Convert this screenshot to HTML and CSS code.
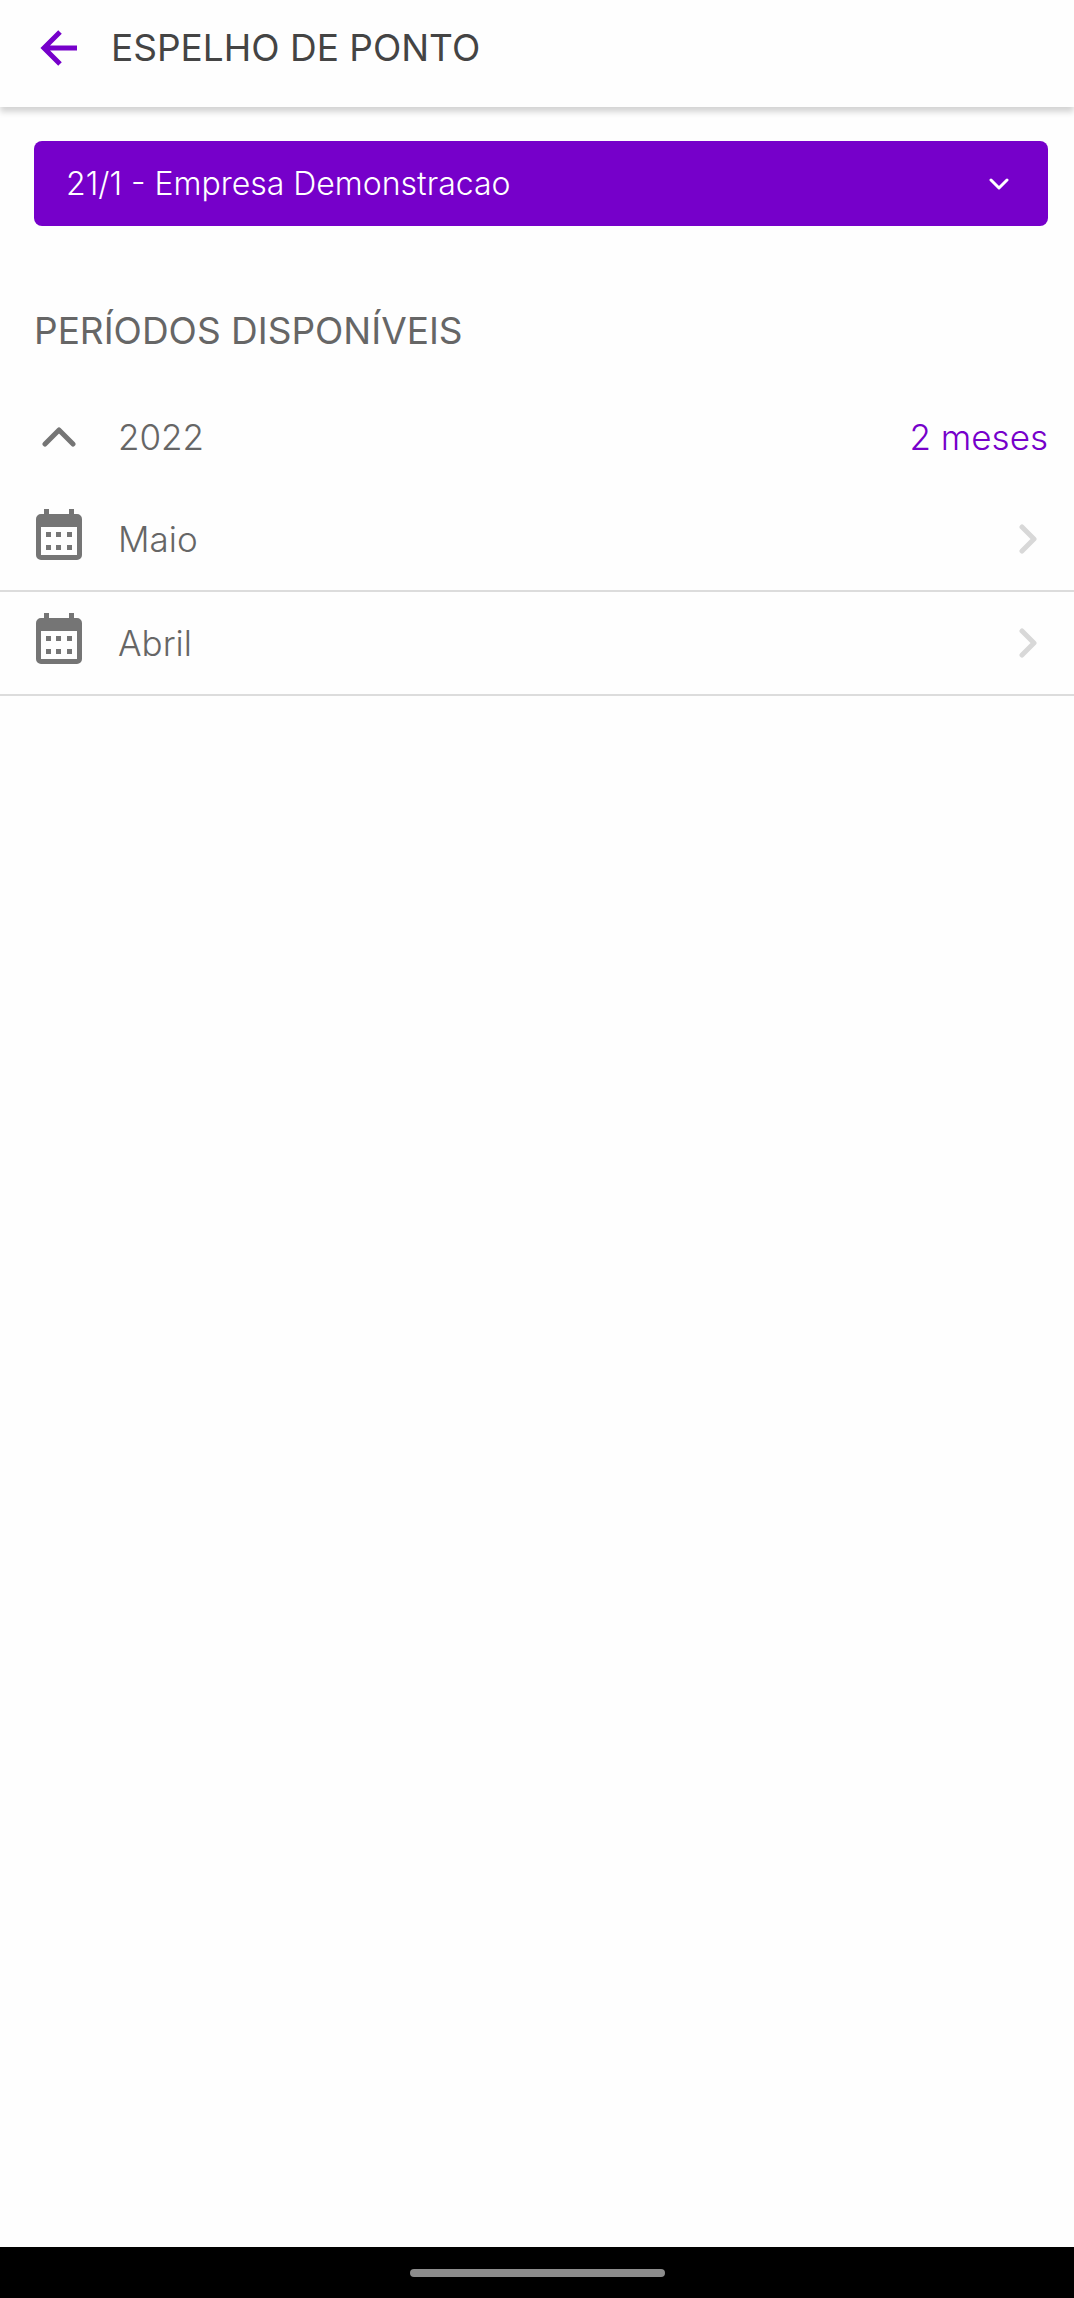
FILE: index.html
```html
<!DOCTYPE html>
<html lang="pt-BR">
<head>
<meta charset="utf-8">
<meta name="viewport" content="width=device-width, initial-scale=1">
<title>Espelho de ponto</title>
<link rel="stylesheet" href="styles.css">
</head>
<body>
<header class="topbar">
  <button class="back" type="button" aria-label="Voltar">
    <svg width="40" height="40" viewBox="0 0 40 40" fill="none" stroke="currentColor" stroke-width="5"><path d="M38 20H6M21 4 5 20l16 16"/></svg>
  </button>
  <h1 class="title">ESPELHO DE PONTO</h1>
</header>
<main class="content">
  <div class="company">
    <select class="company-select" aria-label="Empresa">
      <option>21/1 - Empresa Demonstracao</option>
    </select>
    <svg class="company-arrow" width="20" height="14" viewBox="0 0 20 14" fill="none" stroke="currentColor" stroke-width="3" stroke-linecap="round" stroke-linejoin="round"><path d="m2 3 8 8 8-8"/></svg>
  </div>
  <h2 class="section-title">PERÍODOS DISPONÍVEIS</h2>
  <button class="year" type="button" aria-expanded="true">
    <span class="lead"><svg width="34" height="20" viewBox="0 0 34 20" fill="none" stroke="currentColor" stroke-width="5" stroke-linecap="round" stroke-linejoin="round"><path d="M3 17 17 3l14 14"/></svg></span>
    <span class="label">2022</span>
    <span class="count">2 meses</span>
  </button>
  <ul class="months">
    <li>
      <a class="month" href="#maio">
        <span class="lead"><svg width="46" height="51" viewBox="0 0 46 51" fill="currentColor"><path fill-rule="evenodd" d="M8 0h5v5h20V0h5v5h3a5 5 0 0 1 5 5v36a5 5 0 0 1-5 5H5a5 5 0 0 1-5-5V10a5 5 0 0 1 5-5h3zM5 18v28h36V18z"/><path d="M10 23h5v5h-5zM20 23h5v5h-5zM31 23h5v5h-5zM10 36h5v5h-5zM20 36h5v5h-5zM31 36h5v5h-5z"/></svg></span>
        <span class="label">Maio</span>
        <svg class="go" width="18" height="30" viewBox="0 0 18 30" fill="none" stroke="currentColor" stroke-width="5" stroke-linecap="round" stroke-linejoin="round"><path d="m3 3 12 12L3 27"/></svg>
      </a>
    </li>
    <li>
      <a class="month" href="#abril">
        <span class="lead"><svg width="46" height="51" viewBox="0 0 46 51" fill="currentColor"><path fill-rule="evenodd" d="M8 0h5v5h20V0h5v5h3a5 5 0 0 1 5 5v36a5 5 0 0 1-5 5H5a5 5 0 0 1-5-5V10a5 5 0 0 1 5-5h3zM5 18v28h36V18z"/><path d="M10 23h5v5h-5zM20 23h5v5h-5zM31 23h5v5h-5zM10 36h5v5h-5zM20 36h5v5h-5zM31 36h5v5h-5z"/></svg></span>
        <span class="label">Abril</span>
        <svg class="go" width="18" height="30" viewBox="0 0 18 30" fill="none" stroke="currentColor" stroke-width="5" stroke-linecap="round" stroke-linejoin="round"><path d="m3 3 12 12L3 27"/></svg>
      </a>
    </li>
  </ul>
</main>
<footer class="navbar"><div class="handle"></div></footer>
</body>
</html>
```
FILE: styles.css
```css
* { box-sizing: border-box; }
body {
  margin: 0;
  min-height: 100vh;
  display: flex;
  flex-direction: column;
  background: #fefefe;
  color: #666;
  font-family: Inter, "Liberation Sans", sans-serif;
  font-size: 35px;
  line-height: 40px;
}
svg { display: block; flex: none; }
button {
  border: 0;
  padding: 0;
  background: none;
  font: inherit;
  color: inherit;
  text-align: left;
}
.topbar {
  display: flex;
  align-items: center;
  gap: 32px;
  padding: 28px 26px 39px 39px;
  box-shadow: 0 5px 6px rgba(0, 0, 0, .17);
}
.back { color: #7600ca; }
.title, .section-title {
  margin: 0;
  font-size: 37px;
  font-weight: 400;
}
.title { color: #444; }
.content {
  flex: 1;
  padding-top: 34px;
}
.company {
  display: grid;
  align-items: center;
  margin: 0 26px 0 34px;
  color: #fff;
}
.company-select, .company-arrow { grid-area: 1 / 1; }
.company-select {
  appearance: none;
  width: 100%;
  height: 85px;
  padding: 0 80px 0 32px;
  border: 0;
  border-radius: 8px;
  background: #7600ca;
  color: inherit;
  font: inherit;
  font-size: 32px;
  font-weight: 300;
}
.company-arrow {
  justify-self: end;
  margin-right: 39px;
  pointer-events: none;
}
.section-title { padding: 85px 26px 0 34px; }
.year, .month {
  display: flex;
  align-items: center;
  width: 100%;
  padding: 0 26px 0 34px;
  font-weight: 300;
}
.year {
  height: 103px;
  margin-top: 34px;
}
.lead {
  display: flex;
  justify-content: center;
  flex: none;
  width: 50px;
  margin-right: 34px;
  color: #757575;
}
.label { flex: 1; }
.count { color: #7600ca; }
.months {
  margin: 0;
  padding: 0;
  list-style: none;
}
.month {
  height: 104px;
  padding-right: 37px;
  border-bottom: 2px solid #dcdcdc;
  color: inherit;
  text-decoration: none;
}
.month .lead { padding-bottom: 10px; }
.go { color: #d8d8d8; }
.navbar {
  display: flex;
  align-items: center;
  justify-content: center;
  height: 51px;
  background: #000;
}
.handle {
  width: 255px;
  height: 8px;
  border-radius: 4px;
  background: #8c8c8c;
}
```
